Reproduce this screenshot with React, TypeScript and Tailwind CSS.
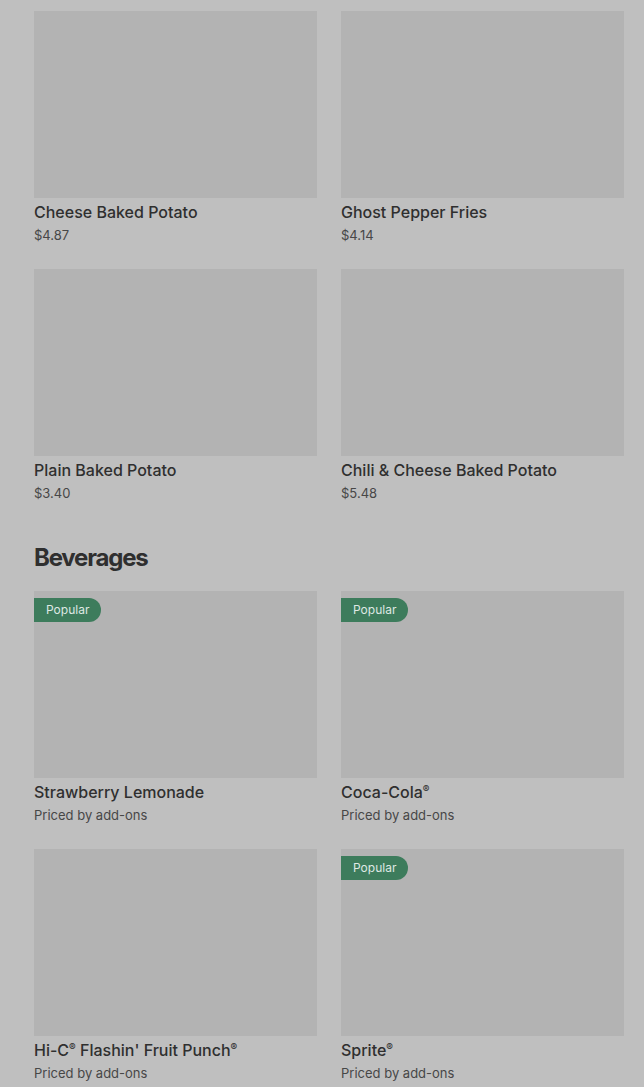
import React from "react";

type Item = { name: string; price: string; popular?: boolean };

const potatoes: Item[] = [
  { name: "Cheese Baked Potato", price: "$4.87" },
  { name: "Ghost Pepper Fries", price: "$4.14" },
  { name: "Plain Baked Potato", price: "$3.40" },
  { name: "Chili & Cheese Baked Potato", price: "$5.48" },
];

const beverages: Item[] = [
  { name: "Strawberry Lemonade", price: "Priced by add-ons", popular: true },
  { name: "Coca-Cola®", price: "Priced by add-ons", popular: true },
  { name: "Hi-C® Flashin' Fruit Punch®", price: "Priced by add-ons" },
  { name: "Sprite®", price: "Priced by add-ons", popular: true },
];

function Name({ text }: { text: string }) {
  const parts = text.split("®");
  return (
    <>
      {parts.map((p, idx) => (
        <React.Fragment key={idx}>
          {p}
          {idx < parts.length - 1 && (
            <span className="relative top-[-5px] text-[10px] leading-none">®</span>
          )}
        </React.Fragment>
      ))}
    </>
  );
}

function Card({ item }: { item: Item }) {
  return (
    <div className="flex flex-col">
      <div className="relative h-[187px] bg-[#b3b3b3]">
        {item.popular && (
          <div className="absolute left-0 top-[7px] flex h-[24px] items-center rounded-r-full bg-[#3d7c5c] pl-[12px] pr-[12px] text-[12px] text-[#dfe8e3]">
            Popular
          </div>
        )}
      </div>
      <div className="mt-[4px] text-[16px] font-medium leading-[20px] text-[#2f2f2f]">
        <Name text={item.name} />
      </div>
      <div className="mt-[3px] text-[13px] leading-[20px] text-[#474747]">{item.price}</div>
    </div>
  );
}

export default function App() {
  return (
    <div
      className="min-h-[1087px] bg-[#bfbfbf] pl-[34px] pr-[20px] pt-[11px]"
      style={{ fontFamily: "Inter, 'Noto Sans', sans-serif" }}
    >
      <div className="grid grid-cols-2 gap-x-[24px] gap-y-[24px]">
        {potatoes.map((i) => (
          <Card key={i.name} item={i} />
        ))}
      </div>
      <h2 className="mt-[39px] text-[24px] font-bold leading-[32px] tracking-[-1.2px] text-[#2f2f2f]">Beverages</h2>
      <div className="mt-[17px] grid grid-cols-2 gap-x-[24px] gap-y-[24px]">
        {beverages.map((i) => (
          <Card key={i.name} item={i} />
        ))}
      </div>
    </div>
  );
}
